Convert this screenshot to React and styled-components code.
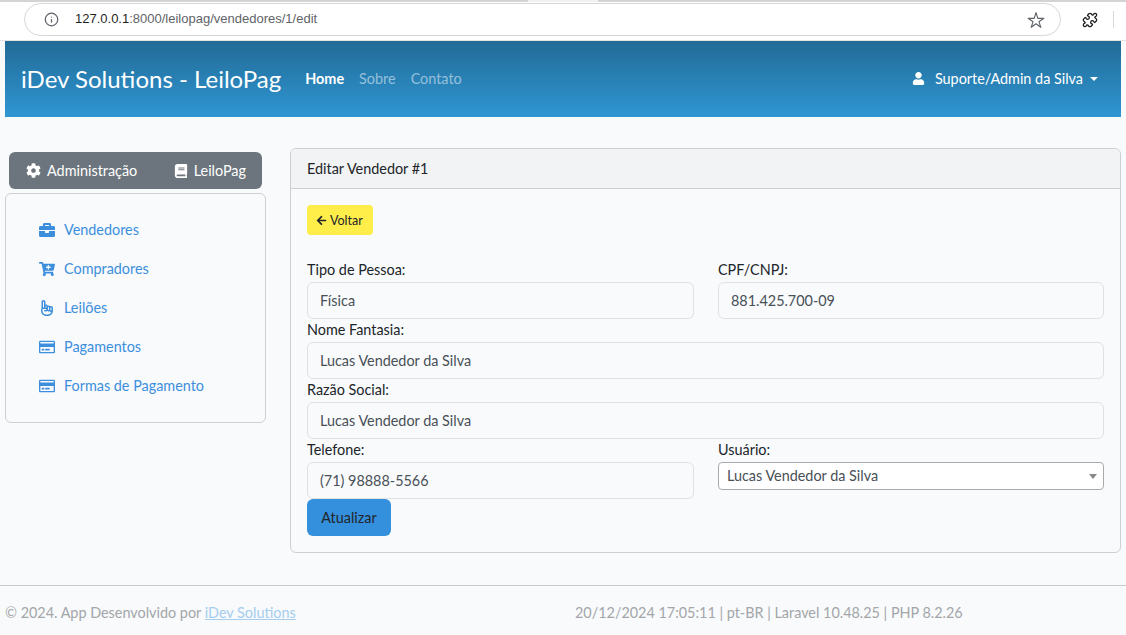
import styled, {createGlobalStyle} from 'styled-components'
import {FaCog, FaBook, FaBriefcase, FaCartPlus, FaRegHandPointUp, FaRegCreditCard, FaArrowLeft, FaUser} from 'react-icons/fa'
import {FaRegHandPointUp as HandUp} from 'react-icons/fa6'
import {FiInfo} from 'react-icons/fi'
import {IoStarOutline} from 'react-icons/io5'
import {LuPuzzle} from 'react-icons/lu'

const GlobalStyle = createGlobalStyle`
    * { box-sizing: border-box; }
    html, body { margin: 0; background: #f8fafc; }
    body {
        font-family: "Lato", "Noto Sans", sans-serif;
        font-size: 14px;
        line-height: 1.6;
        color: #212529;
    }
`

const sideItems = [
    {label: 'Vendedores', icon: <FaBriefcase size={16}/>},
    {label: 'Compradores', icon: <FaCartPlus size={16}/>},
    {label: 'Leilões', icon: <HandUp size={16}/>},
    {label: 'Pagamentos', icon: <FaRegCreditCard size={16}/>},
    {label: 'Formas de Pagamento', icon: <FaRegCreditCard size={16}/>},
]

const App = () => {
    return (
        <Page>
            <GlobalStyle/>
            <Chrome>
                <TabEdge>
                    <TabLine/>
                    <TabGap/>
                    <TabLine/>
                </TabEdge>
                <ToolRow>
                    <Omnibox>
                        <FiInfo size={15} color="#5f6368"/>
                        <Url><b>127.0.0.1</b>:8000/leilopag/vendedores/1/edit</Url>
                        <IoStarOutline size={18} color="#5f6368"/>
                    </Omnibox>
                    <LuPuzzle size={16} color="#1f1f1f"/>
                    <ToolDivider/>
                </ToolRow>
            </Chrome>

            <Navbar>
                <Brand>iDev Solutions - LeiloPag</Brand>
                <NavLink $active>Home</NavLink>
                <NavLink>Sobre</NavLink>
                <NavLink>Contato</NavLink>
                <UserMenu>
                    <FaUser size={13}/>
                    <span>Suporte/Admin da Silva</span>
                    <Caret/>
                </UserMenu>
            </Navbar>

            <Content>
                <Sidebar>
                    <ButtonGroup>
                        <GroupButton><FaCog size={15}/>Administração</GroupButton>
                        <GroupButton><FaBook size={14}/>LeiloPag</GroupButton>
                    </ButtonGroup>
                    <SideCard>
                        {sideItems.map(item => (
                            <SideLink key={item.label}>{item.icon}<span>{item.label}</span></SideLink>
                        ))}
                    </SideCard>
                </Sidebar>

                <MainCard>
                    <CardHeader>Editar Vendedor #1</CardHeader>
                    <CardBody>
                        <BackButton><FaArrowLeft size={11}/>Voltar</BackButton>
                        <FormGrid>
                            <Field>
                                <Label>Tipo de Pessoa:</Label>
                                <Input readOnly defaultValue="Física"/>
                            </Field>
                            <Field>
                                <Label>CPF/CNPJ:</Label>
                                <Input readOnly defaultValue="881.425.700-09"/>
                            </Field>
                            <Field $wide>
                                <Label>Nome Fantasia:</Label>
                                <Input readOnly defaultValue="Lucas Vendedor da Silva"/>
                            </Field>
                            <Field $wide>
                                <Label>Razão Social:</Label>
                                <Input readOnly defaultValue="Lucas Vendedor da Silva"/>
                            </Field>
                            <Field>
                                <Label>Telefone:</Label>
                                <Input readOnly defaultValue="(71) 98888-5566"/>
                            </Field>
                            <Field>
                                <Label>Usuário:</Label>
                                <Select>
                                    <span>Lucas Vendedor da Silva</span>
                                    <SelectArrow/>
                                </Select>
                            </Field>
                        </FormGrid>
                        <SubmitButton>Atualizar</SubmitButton>
                    </CardBody>
                </MainCard>
            </Content>

            <Footer>
                <FooterLeft>© 2024. App Desenvolvido por <a>iDev Solutions</a></FooterLeft>
                <FooterCenter>20/12/2024 17:05:11 | pt-BR | Laravel 10.48.25 | PHP 8.2.26</FooterCenter>
            </Footer>
        </Page>
    )
}

export default App

const Page = styled.div`
    width: 1126px;
    height: 635px;
    overflow: hidden;
    background: #f8fafc;
`

const Chrome = styled.div`
    height: 41px;
    background: #fff;
    border-bottom: 1px solid #e3e3e3;
`

const TabEdge = styled.div`
    display: flex;
    height: 2px;
`

const TabLine = styled.div`
    flex: 1;
    background: #d4d4d4;
`

const TabGap = styled.div`
    width: 70px;
    background: #f1f1f1;
`

const ToolRow = styled.div`
    display: flex;
    align-items: center;
    height: 38px;
    padding: 0 0 3px 24px;
`

const Omnibox = styled.div`
    display: flex;
    align-items: center;
    width: 1037px;
    height: 33px;
    padding: 0 15px 0 19px;
    margin-right: 21px;
    border: 1px solid #d6d6d6;
    border-radius: 17px;
    background: #fff;
`

const Url = styled.div`
    flex: 1;
    margin-left: 16px;
    font-family: "Liberation Sans", sans-serif;
    font-size: 13px;
    color: #5f6368;
    b {
        font-weight: 400;
        color: #1f1f1f;
    }
`

const ToolDivider = styled.div`
    width: 1px;
    height: 17px;
    margin-left: 15px;
    background: #d8d8d8;
`

const Navbar = styled.nav`
    display: flex;
    align-items: center;
    height: 76px;
    margin: 0 5px;
    padding: 0 23px 0 16px;
    background: linear-gradient(180deg, #226b96 0%, #2f96d3 100%);
`

const Brand = styled.div`
    font-size: 24px;
    color: #fff;
    margin-right: 24px;
`

const NavLink = styled.div`
    font-size: 14.4px;
    margin-right: 15px;
    color: ${props => props.$active ? '#fff' : 'rgba(255,255,255,.5)'};
    font-weight: ${props => props.$active ? 700 : 400};
`

const UserMenu = styled.div`
    display: flex;
    align-items: center;
    margin-left: auto;
    gap: 10px;
    font-size: 14.4px;
    color: #fff;
`

const Caret = styled.span`
    width: 0;
    height: 0;
    margin-left: -3px;
    border-top: 4px solid #fff;
    border-left: 4px solid transparent;
    border-right: 4px solid transparent;
`

const Content = styled.div`
    display: flex;
    gap: 24px;
    margin: 31px 5px 0;
`

const Sidebar = styled.aside`
    width: 261px;
    padding-top: 4px;
`

const ButtonGroup = styled.div`
    display: flex;
    justify-content: space-between;
    height: 37px;
    margin: 0 4px 4px;
    padding: 0 16px 0 17px;
    background: #6c757d;
    border-radius: 6px;
`

const GroupButton = styled.div`
    display: flex;
    align-items: center;
    gap: 6px;
    font-size: 14.4px;
    color: #fff;
`

const SideCard = styled.div`
    height: 230px;
    padding: 16px 16px;
    border: 1px solid #cdcfd2;
    border-radius: 6px;
`

const SideLink = styled.div`
    display: flex;
    align-items: center;
    gap: 9px;
    height: 39px;
    padding: 0 17px;
    color: #3d8fdd;
    font-size: 14.4px;
`

const MainCard = styled.section`
    width: 831px;
    height: 405px;
    border: 1px solid #cdcfd2;
    border-radius: 6px;
    overflow: hidden;
`

const CardHeader = styled.header`
    display: flex;
    align-items: center;
    height: 40px;
    padding: 0 16px;
    background: #f2f3f5;
    border-bottom: 1px solid #cdcfd2;
    font-size: 14.4px;
`

const CardBody = styled.div`
    padding: 16px;
`

const BackButton = styled.button`
    display: flex;
    align-items: center;
    gap: 3px;
    width: 66px;
    height: 30px;
    padding: 0 9px;
    border: 0;
    border-radius: 4px;
    background: #ffed4a;
    color: #212529;
    font-family: inherit;
    font-size: 12.5px;
`

const FormGrid = styled.div`
    display: grid;
    grid-template-columns: 387px 386px;
    column-gap: 24px;
    margin-top: 24px;
`

const Field = styled.div`
    grid-column: ${props => props.$wide ? '1 / -1' : 'auto'};
`

const Label = styled.label`
    display: block;
    height: 23px;
    font-size: 14.4px;
    line-height: 22px;
`

const Input = styled.input`
    display: block;
    width: 100%;
    height: 37px;
    padding: 0 12px;
    border: 1px solid #dee2e6;
    border-radius: 6px;
    outline: none;
    background: #f8fafc;
    color: #495057;
    font-family: inherit;
    font-size: 14.4px;
`

const Select = styled.div`
    display: flex;
    align-items: center;
    justify-content: space-between;
    height: 28px;
    padding: 0 6px 0 8px;
    border: 1px solid #aaa;
    border-radius: 4px;
    background: #fff;
    color: #495057;
    font-size: 14.4px;
`

const SelectArrow = styled.span`
    width: 0;
    height: 0;
    border-top: 5px solid #888;
    border-left: 4px solid transparent;
    border-right: 4px solid transparent;
`

const SubmitButton = styled.button`
    display: block;
    width: 84px;
    height: 37px;
    padding: 0;
    border: 0;
    border-radius: 6px;
    background: #3490dc;
    color: #212529;
    font-family: inherit;
    font-size: 14.4px;
`

const Footer = styled.footer`
    display: flex;
    align-items: center;
    height: 50px;
    margin-top: 32px;
    padding-left: 5px;
    border-top: 1px solid #c8cacc;
    color: #a3a6a9;
    font-size: 14.4px;
    padding-top: 5px;
    a {
        color: #a6cdee;
        text-decoration: underline;
    }
`

const FooterLeft = styled.div`
    width: 570px;
`

const FooterCenter = styled.div``
